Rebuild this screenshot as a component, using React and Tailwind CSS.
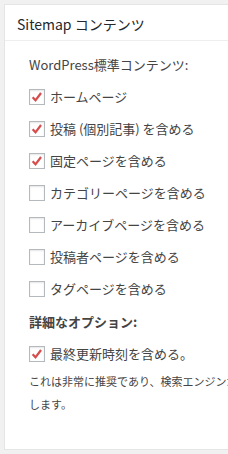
import React from 'react';

const items = [
  { label: 'ホームページ', checked: true },
  { label: '投稿 (個別記事) を含める', checked: true },
  { label: '固定ページを含める', checked: true },
  { label: 'カテゴリーページを含める', checked: false },
  { label: 'アーカイブページを含める', checked: false },
  { label: '投稿者ページを含める', checked: false },
  { label: 'タグページを含める', checked: false },
];

function Checkbox({ checked }) {
  return (
    <span className="flex h-4 w-4 shrink-0 items-center justify-center border border-[#b4b9be] bg-white shadow-[inset_0_1px_2px_rgba(0,0,0,0.1)]">
      {checked && (
        <svg viewBox="0 0 16 16" className="h-[14px] w-[14px]">
          <path d="M3 8.2 L6.3 11.8 L12.6 3.4" fill="none" stroke="#d54e4e" strokeWidth="2.6" />
        </svg>
      )}
    </span>
  );
}

function Row({ label, checked }) {
  return (
    <div className="flex h-8 items-center gap-[5px]">
      <Checkbox checked={checked} />
      <span className="text-[13px] text-[#444]">{label}</span>
    </div>
  );
}

export default function App() {
  return (
    <div
      className="h-[454px] w-[228px] overflow-hidden bg-[#f1f1f1] pl-[4px] pt-[4px]"
      style={{ fontFamily: '"Noto Sans CJK JP", "Noto Sans", sans-serif' }}
    >
      <div className="h-[446px] w-[240px] border border-[#e5e5e5] bg-white">
        <div className="flex h-[36px] items-center border-b border-[#eee] pl-[12px] pt-[3px] text-[14px] text-[#23282d]">
          Sitemap コンテンツ
        </div>
        <div className="pl-[24px] pt-[14px]">
          <div className="text-[13px] text-[#444]">WordPress標準コンテンツ:</div>
          <div className="mt-[6px]">
            {items.map((it) => (
              <Row key={it.label} {...it} />
            ))}
          </div>
          <div className="mt-[7px] text-[13px] font-semibold text-[#444]">詳細なオプション:</div>
          <div className="mt-[7px]">
            <Row label="最終更新時刻を含める。" checked />
          </div>
          <div className="whitespace-nowrap text-[11px] leading-[23px] text-[#444]">
            これは非常に推奨であり、検索エンジンが
          </div>
          <div className="text-[11px] leading-[23px] text-[#444]">します。</div>
        </div>
      </div>
    </div>
  );
}
